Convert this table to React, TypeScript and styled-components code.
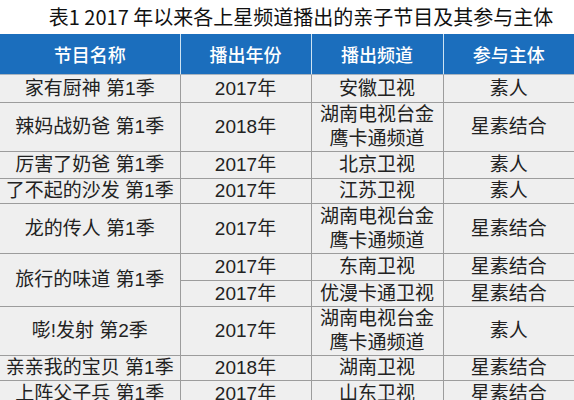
import React from 'react';
import styled, { createGlobalStyle } from 'styled-components';

const GlobalStyle = createGlobalStyle`
  html, body {
    margin: 0;
    padding: 0;
    background: #ffffff;
  }
  body {
    font-family: "Liberation Sans", "Noto Sans CJK SC", sans-serif;
    overflow: hidden;
  }
`;

const Page = styled.div`
  width: 574px;
  height: 400px;
  overflow: hidden;
  background: #ffffff;
`;

const Title = styled.div`
  height: 34px;
  padding-left: 28px;
  font-family: "Noto Sans CJK SC", sans-serif;
  font-size: 20px;
  line-height: 34px;
  text-align: center;
  color: #111;
  white-space: nowrap;
`;

const Table = styled.table`
  width: 574px;
  table-layout: fixed;
  border-collapse: collapse;
`;

const HeadCell = styled.th`
  height: 40px;
  padding: 0;
  background: #1b6ebd;
  color: #ffffff;
  font-family: "Noto Sans CJK SC", sans-serif;
  font-size: 18px;
  font-weight: 500;
  text-align: center;
  border-left: 1px solid #cde3f3;
  border-bottom: 1px solid #a9b4bf;
  &:first-child {
    border-left: none;
  }
`;

const Row = styled.tr<{ $h: number }>`
  height: ${({ $h }) => $h}px;
`;

const Cell = styled.td`
  padding: 0 2px;
  background: #efefef;
  color: #222;
  font-size: 19px;
  line-height: 24px;
  text-align: center;
  vertical-align: middle;
  white-space: nowrap;
  border: 1px solid #9c9c9c;
  &:first-child {
    border-left: none;
  }
  &:last-child {
    border-right: none;
  }
`;

type Entry = {
  name?: string;
  span?: number;
  year: string;
  channel: string[];
  role: string;
  h: number;
};

const rows: Entry[] = [
  { name: '家有厨神 第1季', year: '2017年', channel: ['安徽卫视'], role: '素人', h: 28 },
  { name: '辣妈战奶爸 第1季', year: '2018年', channel: ['湖南电视台金', '鹰卡通频道'], role: '星素结合', h: 48 },
  { name: '厉害了奶爸 第1季', year: '2017年', channel: ['北京卫视'], role: '素人', h: 27 },
  { name: '了不起的沙发 第1季', year: '2017年', channel: ['江苏卫视'], role: '素人', h: 25 },
  { name: '龙的传人 第1季', year: '2017年', channel: ['湖南电视台金', '鹰卡通频道'], role: '星素结合', h: 50 },
  { name: '旅行的味道 第1季', span: 2, year: '2017年', channel: ['东南卫视'], role: '星素结合', h: 27 },
  { year: '2017年', channel: ['优漫卡通卫视'], role: '星素结合', h: 26 },
  { name: '嘭!发射 第2季', year: '2017年', channel: ['湖南电视台金', '鹰卡通频道'], role: '素人', h: 49 },
  { name: '亲亲我的宝贝 第1季', year: '2018年', channel: ['湖南卫视'], role: '星素结合', h: 25 },
  { name: '上阵父子兵 第1季', year: '2017年', channel: ['山东卫视'], role: '星素结合', h: 26 },
];

const App: React.FC = () => {
  return (
    <Page>
      <GlobalStyle />
      <Title>表1 2017 年以来各上星频道播出的亲子节目及其参与主体</Title>
      <Table>
        <colgroup>
          <col style={{ width: 180 }} />
          <col style={{ width: 131 }} />
          <col style={{ width: 132 }} />
          <col style={{ width: 131 }} />
        </colgroup>
        <thead>
          <tr>
            <HeadCell>节目名称</HeadCell>
            <HeadCell>播出年份</HeadCell>
            <HeadCell>播出频道</HeadCell>
            <HeadCell>参与主体</HeadCell>
          </tr>
        </thead>
        <tbody>
          {rows.map((r, i) => (
            <Row key={i} $h={r.h}>
              {r.name && <Cell rowSpan={r.span}>{r.name}</Cell>}
              <Cell>{r.year}</Cell>
              <Cell>
                {r.channel.map((line, j) => (
                  <React.Fragment key={j}>
                    {j > 0 && <br />}
                    {line}
                  </React.Fragment>
                ))}
              </Cell>
              <Cell>{r.role}</Cell>
            </Row>
          ))}
        </tbody>
      </Table>
    </Page>
  );
};

export default App;
